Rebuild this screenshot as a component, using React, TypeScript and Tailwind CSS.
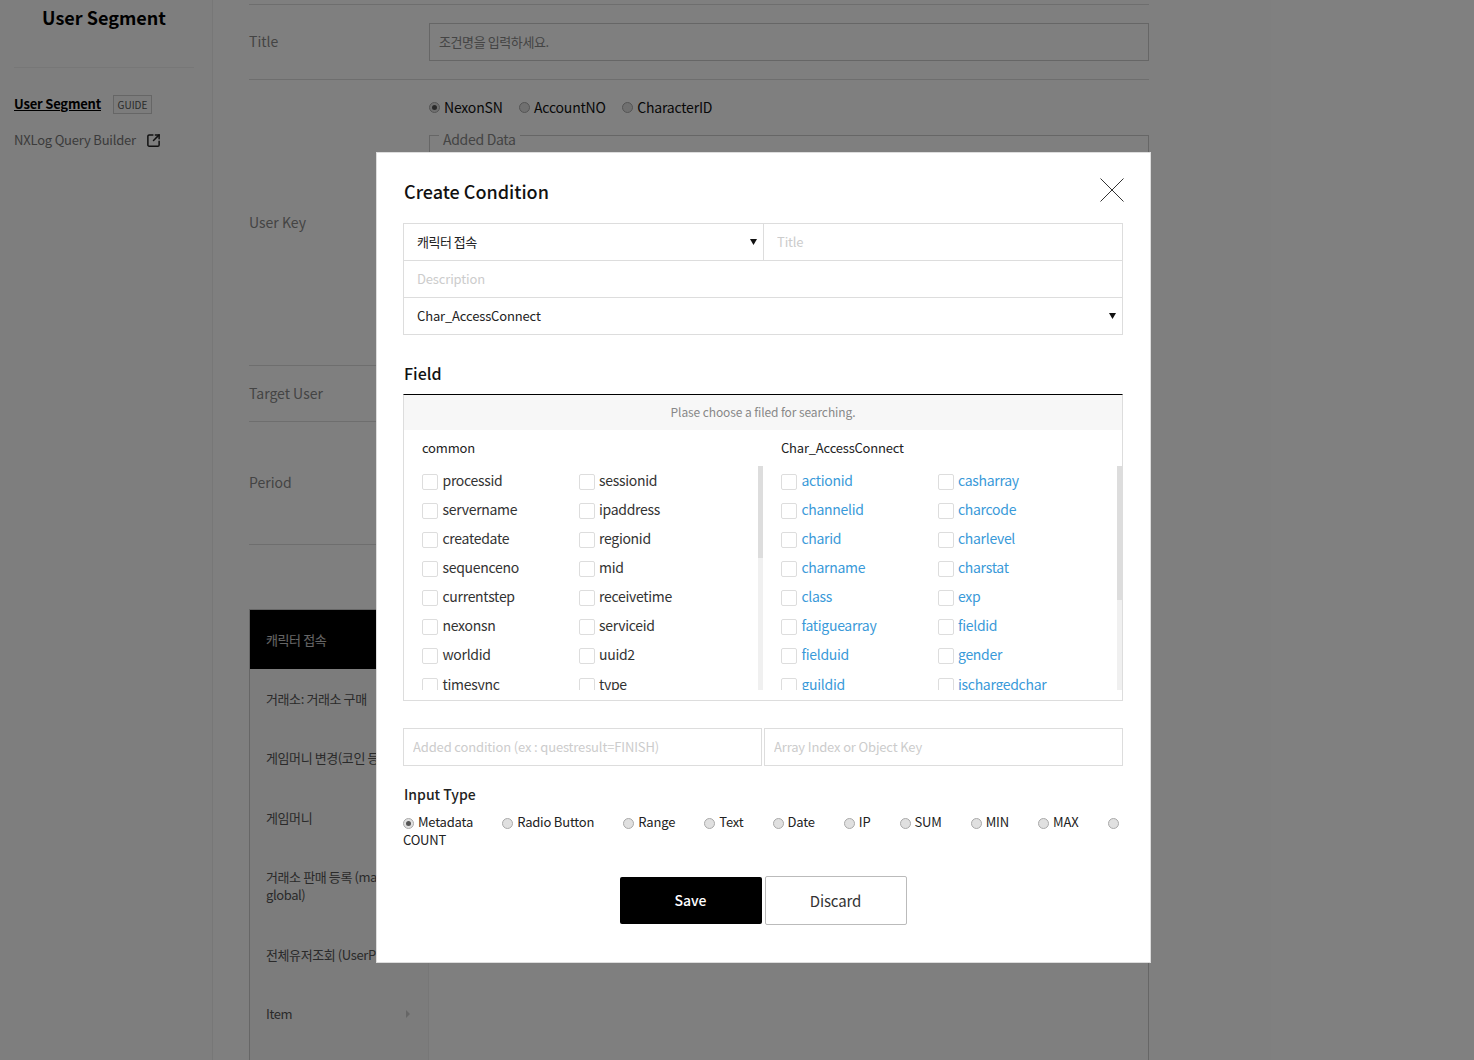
import { SquareArrowOutUpRight } from 'lucide-react'

const commonFields = [
  ['processid', 'sessionid'],
  ['servername', 'ipaddress'],
  ['createdate', 'regionid'],
  ['sequenceno', 'mid'],
  ['currentstep', 'receivetime'],
  ['nexonsn', 'serviceid'],
  ['worldid', 'uuid2'],
  ['timesync', 'type'],
]

const charFields = [
  ['actionid', 'casharray'],
  ['channelid', 'charcode'],
  ['charid', 'charlevel'],
  ['charname', 'charstat'],
  ['class', 'exp'],
  ['fatiguearray', 'fieldid'],
  ['fielduid', 'gender'],
  ['guildid', 'ischargedchar'],
]

const inputTypes = ['Metadata', 'Radio Button', 'Range', 'Text', 'Date', 'IP', 'SUM', 'MIN', 'MAX', 'COUNT']

const conditions = [
  '거래소: 거래소 구매',
  '게임머니 변경(코인 등)',
  '게임머니',
  '거래소 판매 등록 (market global)',
  '전체유저조회 (UserProfile)',
]

function Radio({ checked = false }: { checked?: boolean }) {
  return (
    <span className="inline-flex w-[11px] h-[11px] mr-[4px] shrink-0 rounded-full border border-[#aaa] bg-[#e0e0e0] items-center justify-center align-middle">
      {checked && <span className="w-[5px] h-[5px] rounded-full bg-[#555]" />}
    </span>
  )
}

function Arrow() {
  return (
    <svg width="7" height="6" viewBox="0 0 7 6" className="shrink-0">
      <path d="M0 0h7L3.5 6z" fill="#111" />
    </svg>
  )
}

function FieldColumn({
  title,
  rows,
  thumb,
  link = false,
}: {
  title: string
  rows: string[][]
  thumb: string
  link?: boolean
}) {
  return (
    <div className="pl-[18px]">
      <div className="h-[36px] flex items-center text-[13px] tracking-[-0.2px] text-[#222]">{title}</div>
      <div className="flex h-[224px]">
        <div className="flex-1 overflow-hidden">
          {rows.map((row) => (
            <div key={row[0]} className="h-[29.15px] grid grid-cols-[156.5px_1fr]">
              {row.map((name) => (
                <div key={name} className="flex items-center">
                  <span className="w-[16px] h-[16px] mr-[4.5px] mt-[2px] border border-[#ddd] rounded-[2px] bg-white shrink-0" />
                  <span
                    className={`text-[14px] tracking-[-0.3px] leading-[20px] pb-[2px] ${link ? 'text-[#3a9ad9]' : 'text-[#333]'}`}
                  >
                    {name}
                  </span>
                </div>
              ))}
            </div>
          ))}
        </div>
        <div className="w-[5px] bg-[#f0f0f0]">
          <div className={`${thumb} bg-[#ddd]`} />
        </div>
      </div>
    </div>
  )
}

function Modal() {
  return (
    <div className="absolute left-[376px] top-[152px] w-[775px] h-[811px] bg-white border border-[#ddd] pl-[26px] pr-[27px] pt-[26px]">
      <div className="flex items-start justify-between h-[26px] mb-[18px]">
        <h2 className="text-[18px] leading-[24px] font-medium text-[#111] pl-px">Create Condition</h2>
        <svg width="24" height="24" viewBox="0 0 24 24" className="-mr-px mt-[-1px]">
          <path d="M0.5 0.5l23 23M23.5 0.5l-23 23" stroke="#333" strokeWidth="1" fill="none" />
        </svg>
      </div>

      <div className="border border-[#ddd] text-[13px] tracking-[-0.15px] text-[#222]">
        <div className="flex h-[37px] border-b border-[#ddd]">
          <div className="w-[360px] flex items-center justify-between pl-[13px] pr-[6px] border-r border-[#ddd] tracking-[-0.5px]">
            <span>캐릭터 접속</span>
            <Arrow />
          </div>
          <input placeholder="Title" className="flex-1 min-w-0 px-[13px] outline-none placeholder:text-[#ccc]" />
        </div>
        <div className="h-[37px] border-b border-[#ddd]">
          <input
            placeholder="Description"
            className="w-full h-full px-[13px] pb-[2px] outline-none placeholder:text-[#ccc]"
          />
        </div>
        <div className="h-[36px] flex items-center justify-between pl-[13px] pr-[6px]">
          <span>Char_AccessConnect</span>
          <Arrow />
        </div>
      </div>

      <h3 className="mt-[27px] mb-[10px] text-[16px] leading-[22px] font-medium text-[#111] pl-px">Field</h3>

      <div className="border border-[#ddd] border-t-black h-[307px]">
        <div className="h-[35px] pb-px bg-[#f7f7f7] flex items-center justify-center text-[12px] tracking-[-0.1px] text-[#888]">
          Plase choose a filed for searching.
        </div>
        <div className="grid grid-cols-2">
          <FieldColumn title="common" rows={commonFields} thumb="h-[92px]" />
          <FieldColumn title="Char_AccessConnect" rows={charFields} thumb="h-[134px]" link />
        </div>
      </div>

      <div className="mt-[27px] flex gap-[2px] text-[13px] tracking-[-0.15px]">
        <input
          placeholder="Added condition (ex : questresult=FINISH)"
          className="w-[359px] h-[38px] border border-[#ddd] px-[9px] pb-[2px] outline-none placeholder:text-[#ccc]"
        />
        <input
          placeholder="Array Index or Object Key"
          className="w-[359px] h-[38px] border border-[#ddd] px-[9px] pb-[2px] outline-none placeholder:text-[#ccc]"
        />
      </div>

      <h3 className="mt-[17px] pl-px text-[14px] leading-[22px] font-medium text-[#222]">Input Type</h3>
      <div className="mt-[8px] text-[13px] tracking-[-0.2px] leading-[18px] text-[#222]">
        {inputTypes.map((type, i) => (
          <span key={type}>
            <Radio checked={i === 0} />
            <span className="mr-[26.4px]">{type}</span>{' '}
          </span>
        ))}
      </div>

      <div className="mt-[27px] flex items-center justify-center gap-[3px]">
        <button className="w-[142px] h-[47px] bg-black text-white text-[14px] font-medium rounded-[2px]">Save</button>
        <button className="w-[142px] h-[49px] pt-[2px] bg-white border border-[#bbb] text-[15px] tracking-[-0.1px] text-[#333] rounded-[2px]">
          Discard
        </button>
      </div>
    </div>
  )
}

export default function App() {
  return (
    <div className="relative w-full h-[1060px] overflow-hidden bg-white flex font-['Noto_Sans_CJK_KR',sans-serif]">
      {/* sidebar */}
      <aside className="w-[213px] shrink-0 bg-[#fcfcfc] border-r border-[#eee] px-[14px]">
        <h1 className="w-[180px] h-[68px] pt-[3px] text-center text-[18px] leading-[28px] font-semibold text-black border-b border-[#eee]">
          User Segment
        </h1>
        <div className="mt-[27px] flex items-center h-[18px]">
          <span className="text-[13px] tracking-[-0.2px] font-semibold text-black underline">User Segment</span>
          <span className="ml-[12px] w-[39px] h-[19px] flex items-center justify-center border border-[#ccc] bg-[#f8f8f8] text-[10px] text-[#555]">
            GUIDE
          </span>
        </div>
        <div className="mt-[17px] flex items-center h-[20px] text-[13px] tracking-[-0.2px] text-[#777]">
          NXLog Query Builder
          <SquareArrowOutUpRight size={15} strokeWidth={2.4} className="ml-[10px] text-[#222]" />
        </div>
      </aside>

      {/* form behind the dialog */}
      <main className="w-[900px] ml-[36px] pt-[4px] text-[14px] text-[#888]">
        <div className="h-[76px] flex items-center border-y border-[#ddd]">
          <span className="w-[180px] pb-[2px]">Title</span>
          <div className="flex-1 h-[38px] border border-[#ccc] flex items-center px-[9px] text-[13px] tracking-[-0.4px]">
            조건명을 입력하세요.
          </div>
        </div>
        <div className="h-[286px] flex items-center border-b border-[#ddd]">
          <span className="w-[180px]">User Key</span>
          <div className="flex-1 h-[285px] pt-[17px]">
            <div className="flex h-[20px] items-center text-[#111] tracking-[-0.2px]">
              <Radio checked />
              <span className="mr-[16.5px]">NexonSN</span>
              <Radio />
              <span className="mr-[16.5px]">AccountNO</span>
              <Radio />
              <span>CharacterID</span>
            </div>
            <fieldset className="mt-[13px] border border-[#ccc] h-[200px] pl-[9px]">
              <legend className="px-[4px] text-[14px] tracking-[-0.3px] leading-[19px] h-[10px]">Added Data</legend>
            </fieldset>
          </div>
        </div>
        <div className="h-[56px] flex items-center border-b border-[#ddd]">
          <span>Target User</span>
        </div>
        <div className="h-[123px] flex items-center border-b border-[#ddd]">
          <span className="pb-[2px]">Period</span>
        </div>

        <div className="mt-[64px] h-[500px] border border-[#ccc] flex">
          <ul className="w-[179px] bg-[#f8f8f8] border-r border-[#eee] text-[13px] tracking-[-0.4px] leading-[18px] text-[#555]">
            <li className="h-[59px] bg-black text-white/80 flex items-center px-[16px]">캐릭터 접속</li>
            {conditions.map((c, i) => (
              <li key={c} className={`py-[20.75px] pl-[16px] pr-[12px] ${i === 4 ? 'whitespace-nowrap' : ''}`}>
                {c}
              </li>
            ))}
            <li className="py-[20.75px] flex items-center justify-between pl-[16px] pr-[18px]">
              <span>Item</span>
              <svg width="4" height="8" viewBox="0 0 4 8">
                <path d="M0 0l4 4-4 4z" fill="#ccc" />
              </svg>
            </li>
          </ul>
        </div>
      </main>

      <div className="absolute inset-0 bg-black/50" />
      <Modal />
    </div>
  )
}
